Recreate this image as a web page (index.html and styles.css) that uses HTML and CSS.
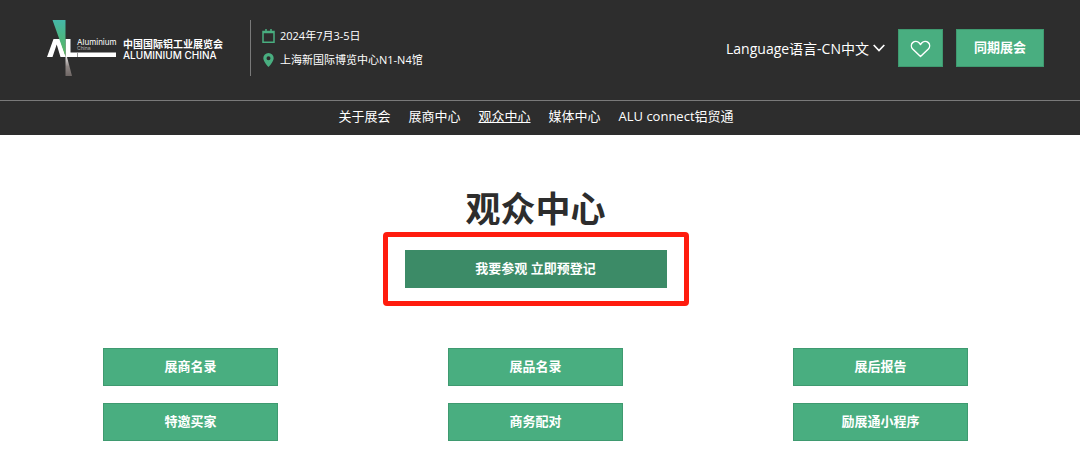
FILE: index.html
```html
<!DOCTYPE html>
<html lang="zh-CN">
<head>
<meta charset="utf-8">
<meta name="viewport" content="width=device-width, initial-scale=1">
<title>观众中心</title>
<link rel="stylesheet" href="styles.css">
</head>
<body>
<header class="site-header">
  <div class="top-bar">
    <a class="brand" href="#">
      <svg class="brand-mark" viewBox="0 0 72 58" aria-hidden="true">
        <defs>
          <linearGradient id="beam" x1="0" y1="0" x2="0" y2="1">
            <stop offset="0" stop-color="#45b7a8"/>
            <stop offset="0.5" stop-color="#4cb680"/>
            <stop offset="1" stop-color="#5cb85c"/>
          </linearGradient>
          <linearGradient id="shade" x1="0" y1="0" x2="0" y2="1">
            <stop offset="0" stop-color="#e8e6e5"/>
            <stop offset="0.5" stop-color="#8d8583"/>
            <stop offset="1" stop-color="#6f6765"/>
          </linearGradient>
        </defs>
        <path d="M1 38L7.500 20H14L19.500 37V38H14.500L10.700 25.500L6.500 38z" fill="#fff"/>
        <path d="M19.500 20H24.500V33.500H70V38H19.500z" fill="#fff"/>
        <path d="M6.500 1H19.500V37.500z" fill="url(#beam)"/>
        <path d="M31.500 34V38" stroke="#2d2d2d" stroke-width="0.500"/>
        <path d="M19.500 38H21L26 57H19.500z" fill="url(#shade)"/>
        <text class="mark-name" x="31" y="26">Aluminium</text>
        <text class="mark-place" x="31" y="31">China</text>
      </svg>
      <span class="brand-text">
        <span class="brand-cn">中国国际铝工业展览会</span>
        <span class="brand-en">ALUMINIUM CHINA</span>
      </span>
    </a>
    <ul class="event-info">
      <li>
        <svg class="info-icon" viewBox="0 0 13 14" aria-hidden="true"><path d="M1 2.500H12V13.200H1zM1 3.500H12M4 0V3M9 0V3" fill="none" stroke="#49ae80" stroke-width="1.500"/></svg>
        <span>2024年7月3-5日</span>
      </li>
      <li>
        <svg class="info-icon" viewBox="0 0 13 14" aria-hidden="true"><path d="M6.500 0a5.200 5.200 0 0 0-5.200 5.200C1.300 8.500 6.500 14 6.500 14s5.200-5.500 5.200-8.800A5.200 5.200 0 0 0 6.500 0zm0 3.300a2 2 0 1 1 0 4 2 2 0 0 1 0-4z" fill="#49ae80" fill-rule="evenodd"/></svg>
        <span>上海新国际博览中心N1-N4馆</span>
      </li>
    </ul>
    <div class="actions">
      <button class="language" type="button">Language语言-CN中文
        <svg class="chevron" viewBox="0 0 12 8" aria-hidden="true"><path d="M.7 1L6 6.500L11.300 1" fill="none" stroke="#fff" stroke-width="1.700"/></svg>
      </button>
      <button class="btn favourite" type="button" aria-label="收藏">
        <svg class="heart" viewBox="0 0 22 18" aria-hidden="true"><path d="M11 16.800L2.800 9C1 7 1 4 2.800 2.300 4.800.5 7.800.7 9.500 2.500L11 4.200 12.500 2.500C14.200.7 17.200.5 19.200 2.300 21 4 21 7 19.200 9z" fill="none" stroke="#fff" stroke-width="1.500" stroke-linejoin="round"/></svg>
      </button>
      <button class="btn shows" type="button">同期展会</button>
    </div>
  </div>
  <nav class="main-nav">
    <a href="#">关于展会</a>
    <a href="#">展商中心</a>
    <a class="current" href="#" aria-current="page">观众中心</a>
    <a href="#">媒体中心</a>
    <a href="#">ALU connect铝贸通</a>
  </nav>
</header>
<main class="content">
  <h1 class="title">观众中心</h1>
  <div class="highlight"><a class="btn register" href="#">我要参观 立即预登记</a></div>
  <div class="links">
    <a class="btn" href="#">展商名录</a>
    <a class="btn" href="#">展品名录</a>
    <a class="btn" href="#">展后报告</a>
    <a class="btn" href="#">特邀买家</a>
    <a class="btn" href="#">商务配对</a>
    <a class="btn" href="#">励展通小程序</a>
  </div>
</main>
</body>
</html>
```
FILE: styles.css
```css
* {
  box-sizing: border-box;
}

body {
  margin: 0;
  background: #fff;
  color: #2d2d2d;
  font-family: "Open Sans", "Noto Sans CJK SC", sans-serif;
  font-size: 13px;
}

a {
  color: inherit;
  text-decoration: none;
}

button {
  font: inherit;
  cursor: pointer;
}

.site-header {
  background: #2d2d2d;
  color: #fff;
}

.top-bar {
  display: flex;
  align-items: center;
  padding: 19px 36px 23px 46px;
}

.brand {
  display: flex;
  align-items: center;
  gap: 5px;
}

.brand-mark {
  width: 72px;
  height: 58px;
}

.mark-name,
.mark-place {
  fill: #fff;
  font-family: Inter, sans-serif;
  font-size: 8px;
}

.mark-place {
  fill: #b5b5b5;
  font-size: 5px;
}

.brand-text {
  display: flex;
  flex-direction: column;
  padding-top: 2px;
  white-space: nowrap;
}

.brand-cn {
  font-size: 10px;
  font-weight: 700;
  line-height: 12px;
}

.brand-en {
  font-family: Inter, sans-serif;
  font-size: 10px;
  font-weight: 500;
  line-height: 10px;
}

.event-info {
  display: flex;
  flex-direction: column;
  gap: 8px;
  margin: 0 0 0 27px;
  padding: 8px 0 8px 11px;
  border-left: 1px solid #7a7a7a;
  font-size: 11px;
  line-height: 16px;
  list-style: none;
  white-space: nowrap;
}

.event-info li {
  display: flex;
  align-items: center;
  gap: 5px;
}

.info-icon {
  width: 13px;
  height: 14px;
}

.actions {
  display: flex;
  align-items: center;
  margin-left: auto;
}

.language {
  display: flex;
  align-items: center;
  gap: 4px;
  margin-right: 13px;
  padding: 0;
  border: 0;
  background: none;
  color: #fff;
  font-size: 14px;
  white-space: nowrap;
}

.chevron {
  width: 12px;
  height: 8px;
}

.btn {
  display: flex;
  align-items: center;
  justify-content: center;
  height: 38px;
  padding: 0 17px 2px;
  border: 1px solid #3f9a70;
  background: #49ae80;
  color: #fff;
  font-weight: 700;
  line-height: 20px;
}

.favourite {
  margin-right: 13px;
  padding: 2px 11px 0;
}

.heart {
  width: 21px;
  height: 18px;
}

.main-nav {
  display: flex;
  justify-content: center;
  gap: 18px;
  padding: 5px 8px 9px 0;
  border-top: 1px solid #7a7a7a;
  line-height: 20px;
}

.current {
  text-decoration: underline;
}

.content {
  display: flex;
  flex-direction: column;
  align-items: center;
  padding: 51px 27px 10px 18px;
}

.title {
  margin: 0;
  font-size: 35px;
  line-height: 46px;
}

.highlight {
  width: 306px;
  max-width: 100%;
  padding: 13px 17px;
  border: 5px solid #ff1c0e;
  border-radius: 4px;
}

.btn.register {
  border-color: #3c8b67;
  background: #3c8b67;
}

.links {
  display: grid;
  grid-template-columns: repeat(3, 1fr);
  gap: 17px 0;
  justify-items: center;
  width: 100%;
  margin-top: 42px;
}

.links .btn {
  width: 51%;
}
```
